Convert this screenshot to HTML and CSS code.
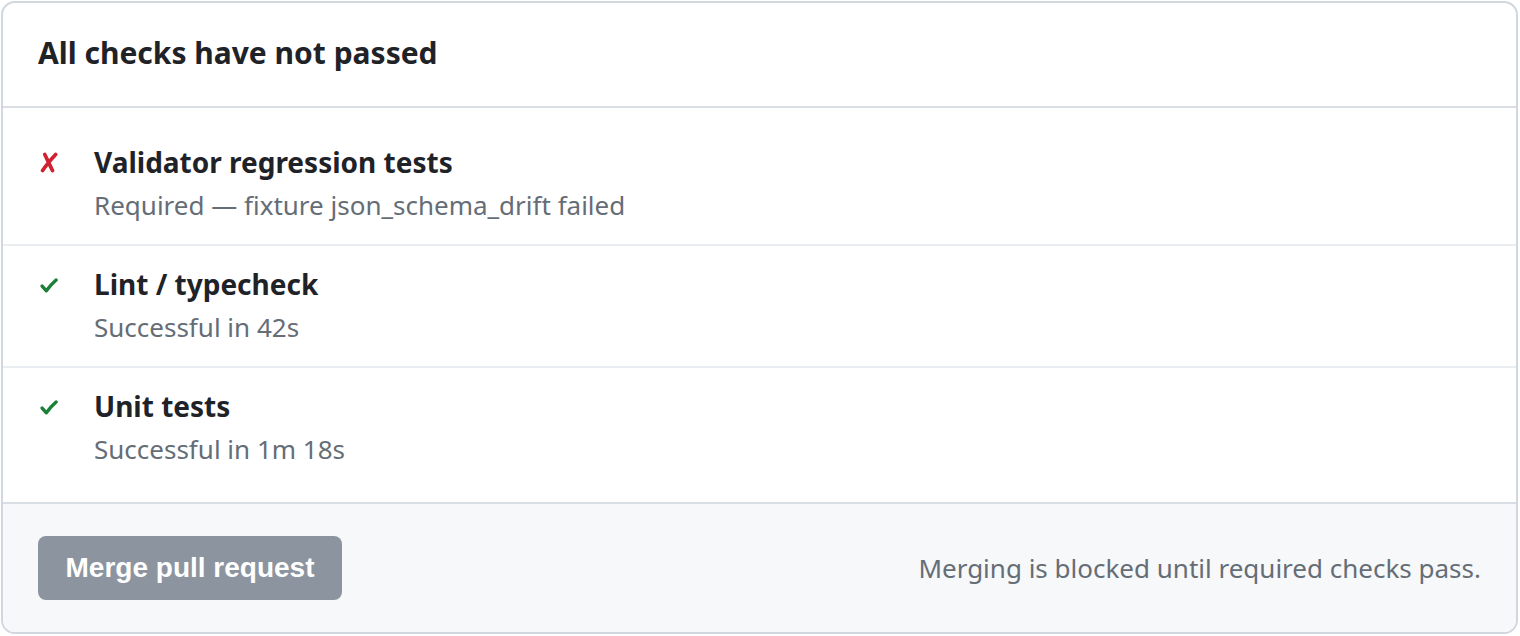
FILE: index.html
```html
<!DOCTYPE html>
<html lang="en">
<head>
<meta charset="utf-8">
<title>Checks</title>
<link rel="stylesheet" href="styles.css">
</head>
<body>
<section class="card">
  <header class="card-header">
    <h2 class="card-title">All checks have not passed</h2>
  </header>
  <ul class="checks">
    <li class="check">
      <span class="status status-fail" aria-label="failed">
        <svg class="icon-x" width="18" height="21" viewBox="0 0 16 19" aria-hidden="true"><path d="M4.2 2.2 C6.5 7 8.5 11.5 11.2 16.8 M14 2.2 C10 6.5 6 11 2.2 16.8" fill="none" stroke="currentColor" stroke-width="3.3" stroke-linecap="round"/></svg>
      </span>
      <div class="check-body">
        <div class="check-name">Validator regression tests</div>
        <div class="check-meta">Required — fixture json_schema_drift failed</div>
      </div>
    </li>
    <li class="check">
      <span class="status status-ok" aria-label="passed">
        <svg class="icon-check" width="18" height="15" viewBox="0 0 17 14" aria-hidden="true"><path d="M2 7.5 L6 12 C8.5 8.5 11.5 5 15.2 1.8" fill="none" stroke="currentColor" stroke-width="3.2" stroke-linecap="round" stroke-linejoin="round"/></svg>
      </span>
      <div class="check-body">
        <div class="check-name">Lint / typecheck</div>
        <div class="check-meta">Successful in 42s</div>
      </div>
    </li>
    <li class="check">
      <span class="status status-ok" aria-label="passed">
        <svg class="icon-check" width="18" height="15" viewBox="0 0 17 14" aria-hidden="true"><path d="M2 7.5 L6 12 C8.5 8.5 11.5 5 15.2 1.8" fill="none" stroke="currentColor" stroke-width="3.2" stroke-linecap="round" stroke-linejoin="round"/></svg>
      </span>
      <div class="check-body">
        <div class="check-name">Unit tests</div>
        <div class="check-meta">Successful in 1m 18s</div>
      </div>
    </li>
  </ul>
  <footer class="card-footer">
    <button class="merge-btn" type="button" disabled>Merge pull request</button>
    <p class="merge-note">Merging is blocked until required checks pass.</p>
  </footer>
</section>
</body>
</html>
```
FILE: styles.css
```css
html, body {
  margin: 0;
  padding: 0;
  background: #ffffff;
}
body {
  padding: 1px 1px 0 1px;
  font-family: "Noto Sans", "Open Sans", sans-serif;
}
.card {
  border: 2px solid #d0d7de;
  border-radius: 14px;
  overflow: hidden;
  background: #ffffff;
  margin-right: 1px;
}
.card-header {
  box-sizing: border-box;
  height: 105px;
  display: flex;
  align-items: center;
  padding: 0 35px 4px 35px;
  border-bottom: 2px solid #d8dee4;
}
.card-title {
  margin: 0;
  font-size: 30px;
  font-weight: 700;
  color: #1f2328;
}
.checks {
  list-style: none;
  margin: 0;
  padding: 16px 0 14px 0;
}
.check {
  display: flex;
  align-items: flex-start;
  box-sizing: border-box;
  height: 122px;
  padding: 18px 35px 0 35px;
  border-bottom: 2px solid #eaeef2;
}
.check:last-child {
  border-bottom: none;
  height: 120px;
}
.status {
  width: 56px;
  height: 40px;
  flex: none;
  display: flex;
  align-items: center;
  padding-left: 2px;
  box-sizing: border-box;
}
.status svg {
  display: block;
}
.status-fail { color: #cf222e; }
.status-ok { color: #1a7f37; }
.icon-check { margin-top: 3px; }
.check-name {
  font-size: 28px;
  font-weight: 700;
  color: #1f2328;
  line-height: 40px;
}
.check-meta {
  font-size: 26px;
  color: #656d76;
  line-height: 46px;
}
.card-footer {
  display: flex;
  align-items: center;
  justify-content: space-between;
  padding: 32px 35px 32px 35px;
  background: #f6f8fa;
  border-top: 2px solid #d8dee4;
}
.merge-btn {
  width: 304px;
  height: 64px;
  border: none;
  border-radius: 8px;
  background: #8c959f;
  color: #ffffff;
  font-family: "Liberation Sans", Arial, sans-serif;
  font-size: 28px;
  font-weight: 700;
  padding: 0;
}
.merge-btn:disabled {
  color: #ffffff;
  cursor: not-allowed;
}
.merge-note {
  margin: 0;
  font-size: 26px;
  color: #656d76;
}
```
